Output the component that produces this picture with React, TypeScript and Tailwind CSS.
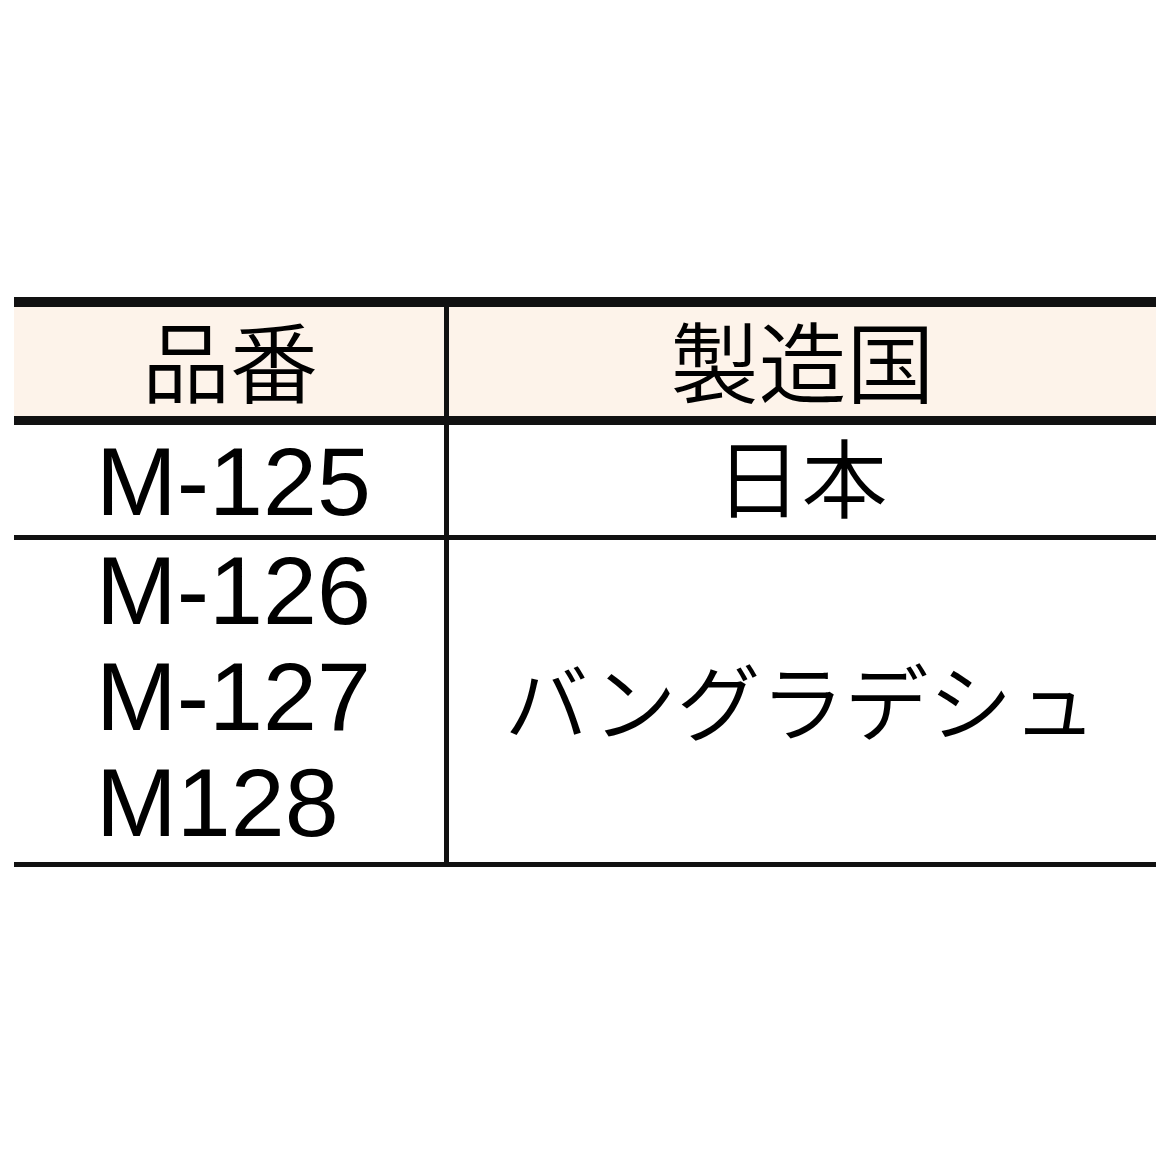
const latin = {
  fontFamily: '"Liberation Sans", "Noto Sans CJK JP", sans-serif',
}

const cells = {
  left: "w-[435px] shrink-0 border-r-[5px] border-[#111]",
  right: "flex-1",
}

export default function App() {
  return (
    <div className="min-h-[1166px] w-[1166px] bg-white pt-[297px] text-black" style={latin}>
      <div className="mx-[14px] w-[1142px]">
        {/* header */}
        <div className="border-t-[10px] border-b-[9px] border-[#111]">
          <div className="flex h-[109px] bg-[#fdf3ea]">
            <div className={`${cells.left} flex items-center justify-center`}>
              <span className="text-[88px] leading-none font-[350] font-['Noto_Sans_CJK_JP'] pb-[8px] pl-[2px]">品番</span>
            </div>
            <div className={`${cells.right} flex items-center justify-center`}>
              <span className="text-[88px] leading-none font-[350] font-['Noto_Sans_CJK_JP'] pb-[8px]">製造国</span>
            </div>
          </div>
        </div>

        {/* row 1 */}
        <div className="flex h-[115px] border-b-[5px] border-[#111]">
          <div className={`${cells.left} flex items-center pl-[82px]`}>
            <span className="text-[97px] leading-[107px] pt-[2px]">M-125</span>
          </div>
          <div className={`${cells.right} flex items-center justify-center`}>
            <span className="text-[86px] leading-none font-[350] font-['Noto_Sans_CJK_JP'] pb-[10px] pr-[2px]">日本</span>
          </div>
        </div>

        {/* row 2 */}
        <div className="flex h-[327px] border-b-[5px] border-[#111]">
          <div className={`${cells.left} flex flex-col justify-center pl-[82px] pb-[8px]`}>
            <span className="text-[97px] leading-[106px]">M-126</span>
            <span className="text-[97px] leading-[106px]">M-127</span>
            <span className="text-[97px] leading-[106px]">M128</span>
          </div>
          <div className={`${cells.right} flex items-center justify-center`}>
            <span className="text-[84px] leading-none font-[350] font-['Noto_Sans_CJK_JP'] pr-[4px] pb-[4px]">バングラデシュ</span>
          </div>
        </div>
      </div>
    </div>
  )
}
